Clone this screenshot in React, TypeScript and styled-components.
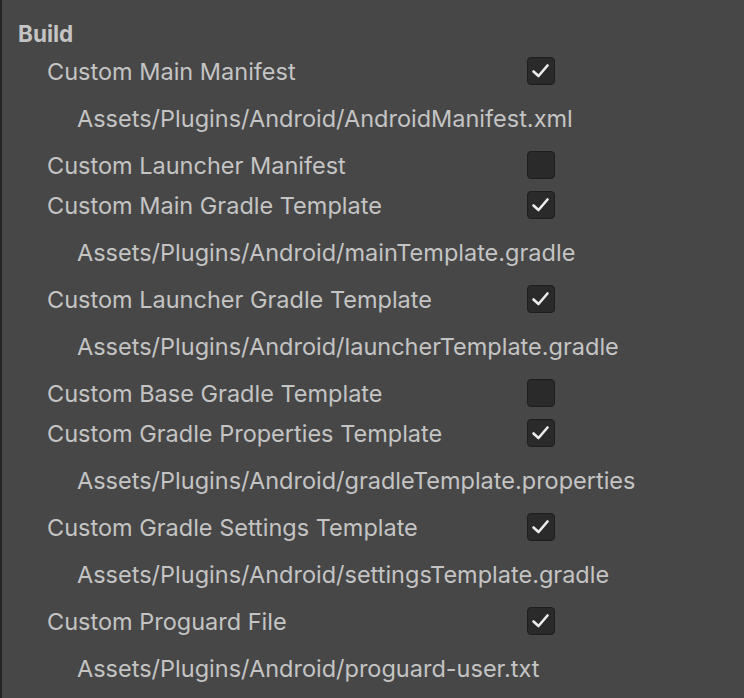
import styled, { createGlobalStyle } from 'styled-components';

const GlobalStyle = createGlobalStyle`
    html, body {
        margin: 0;
        padding: 0;
        background: #474747;
    }
`;

const settings = [
    { label: 'Custom Main Manifest', checked: true, path: 'Assets/Plugins/Android/AndroidManifest.xml' },
    { label: 'Custom Launcher Manifest', checked: false },
    { label: 'Custom Main Gradle Template', checked: true, path: 'Assets/Plugins/Android/mainTemplate.gradle' },
    { label: 'Custom Launcher Gradle Template', checked: true, path: 'Assets/Plugins/Android/launcherTemplate.gradle' },
    { label: 'Custom Base Gradle Template', checked: false },
    { label: 'Custom Gradle Properties Template', checked: true, path: 'Assets/Plugins/Android/gradleTemplate.properties' },
    { label: 'Custom Gradle Settings Template', checked: true, path: 'Assets/Plugins/Android/settingsTemplate.gradle' },
    { label: 'Custom Proguard File', checked: true, path: 'Assets/Plugins/Android/proguard-user.txt' },
];

function Checkbox({ checked }: { checked: boolean }) {
    return (
        <Box>
            {checked && (
                <svg width="28" height="28" viewBox="0 0 28 28">
                    <path
                        d="M6.5 14.5 L11.5 19 L20.5 8.5"
                        fill="none"
                        stroke="#ececec"
                        strokeWidth="2.6"
                        strokeLinecap="round"
                        strokeLinejoin="round"
                    />
                </svg>
            )}
        </Box>
    );
}

export default function App() {
    return (
        <Panel>
            <GlobalStyle />
            <Header>Build</Header>
            {settings.map((s) => (
                <div key={s.label}>
                    <ToggleRow>
                        <Label>{s.label}</Label>
                        <Checkbox checked={s.checked} />
                    </ToggleRow>
                    {s.path && <PathRow>{s.path}</PathRow>}
                </div>
            ))}
        </Panel>
    );
}

const Panel = styled.div`
    width: 744px;
    height: 698px;
    box-sizing: border-box;
    border-left: 2px solid #232323;
    padding-top: 16px;
    font-family: Inter, "Noto Sans", sans-serif;
    color: #c4c4c4;
    overflow: hidden;
`;

const Header = styled.div`
    height: 35px;
    line-height: 35px;
    padding-left: 16px;
    font-size: 22.5px;
    font-weight: 700;
`;

const ToggleRow = styled.div`
    height: 40px;
    display: flex;
    align-items: center;
    padding-left: 45px;
`;

const Label = styled.div`
    width: 480px;
    font-size: 23.5px;
`;

const PathRow = styled.div`
    height: 54px;
    display: flex;
    align-items: center;
    padding-left: 75px;
    font-size: 23.5px;
`;

const Box = styled.div`
    width: 28px;
    height: 28px;
    box-sizing: border-box;
    border: 1px solid #1e1e1e;
    border-radius: 4px;
    background: #2a2a2a;
    display: flex;
    align-items: center;
    justify-content: center;
    svg {
        flex: none;
    }
`;
